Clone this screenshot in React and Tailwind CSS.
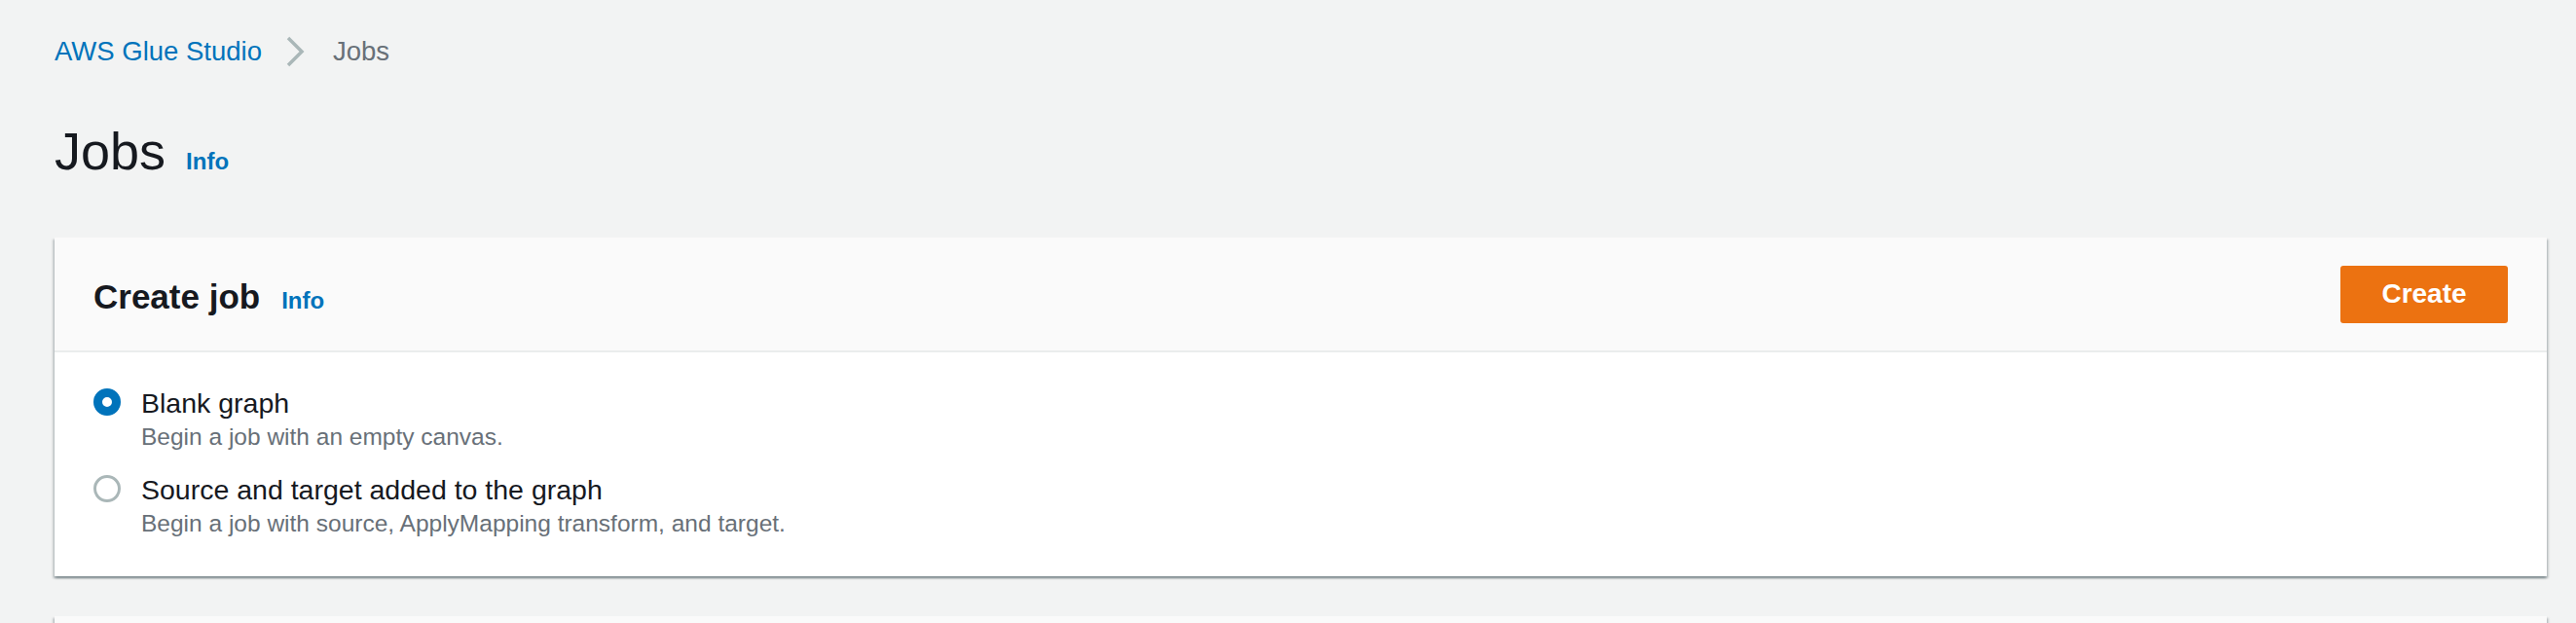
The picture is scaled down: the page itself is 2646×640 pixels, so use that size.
import React, { useState } from 'react';

const OPTIONS = [
  { id: 'blank', label: 'Blank graph', hint: 'Begin a job with an empty canvas.' },
  {
    id: 'source-target',
    label: 'Source and target added to the graph',
    hint: 'Begin a job with source, ApplyMapping transform, and target.',
  },
];

const cardShadow =
  'shadow-[0_2px_2px_0_rgba(0,28,36,0.3),2px_2px_2px_0_rgba(0,28,36,0.15),-2px_2px_2px_0_rgba(0,28,36,0.15)]';

function Radio({ checked }) {
  if (checked) {
    return <span className="mt-[3px] block h-[28px] w-[28px] shrink-0 rounded-full border-[9px] border-[#0073bb] bg-white" />;
  }
  return <span className="mt-[3px] block h-[28px] w-[28px] shrink-0 rounded-full border-[3px] border-[#aab7b8] bg-white" />;
}

export default function App() {
  const [choice, setChoice] = useState('blank');

  return (
    <div
      className="h-[640px] overflow-hidden bg-[#f2f3f3] pl-[56px] pr-[30px] pt-[35px] text-[#16191f]"
      style={{ fontFamily: '"Liberation Sans", Arial, sans-serif' }}
    >
      {/* breadcrumb */}
      <nav className="flex h-[36px] items-center text-[27.5px] leading-[36px]">
        <a className="text-[#0073bb]">AWS Glue Studio</a>
        <svg width="20" height="32" viewBox="0 0 20 32" className="ml-[25px] mr-[28px]" fill="none">
          <polyline points="2,2 16,16 2,30" stroke="#aab7b8" strokeWidth="3.5" />
        </svg>
        <span className="text-[#687078]">Jobs</span>
      </nav>

      {/* page title */}
      <div className="mt-[52px] flex items-baseline gap-[21px]">
        <h1 className="text-[54px] font-normal leading-[64px]">Jobs</h1>
        <a className="text-[24px] font-bold text-[#0073bb]">Info</a>
      </div>

      {/* create job card */}
      <section className={`mt-[57px] bg-white ${cardShadow}`}>
        <header className="flex h-[118px] items-center justify-between border-b-2 border-[#eaeded] bg-[#fafafa] px-[40px]">
          <div className="flex items-baseline gap-[22px] pt-[6px]">
            <h2 className="text-[35px] font-bold leading-[44px]">Create job</h2>
            <a className="text-[24px] font-bold text-[#0073bb]">Info</a>
          </div>
          <button className="h-[59px] w-[172px] rounded-[3px] bg-[#ec7211] text-[28px] font-bold text-white">
            Create
          </button>
        </header>
        <div className="flex flex-col gap-[19px] px-[40px] pb-[37px] pt-[34px]">
          {OPTIONS.map((opt) => (
            <label key={opt.id} className="flex cursor-pointer gap-[21px]" onClick={() => setChoice(opt.id)}>
              <Radio checked={choice === opt.id} />
              <div>
                <div className="text-[28.5px] leading-[36px]">{opt.label}</div>
                <div className="text-[24.5px] leading-[34px] text-[#687078]">{opt.hint}</div>
              </div>
            </label>
          ))}
        </div>
      </section>

      {/* next card (cut off) */}
      <section className={`mt-[41px] h-[120px] bg-[#fafafa] ${cardShadow}`} />
    </div>
  );
}
